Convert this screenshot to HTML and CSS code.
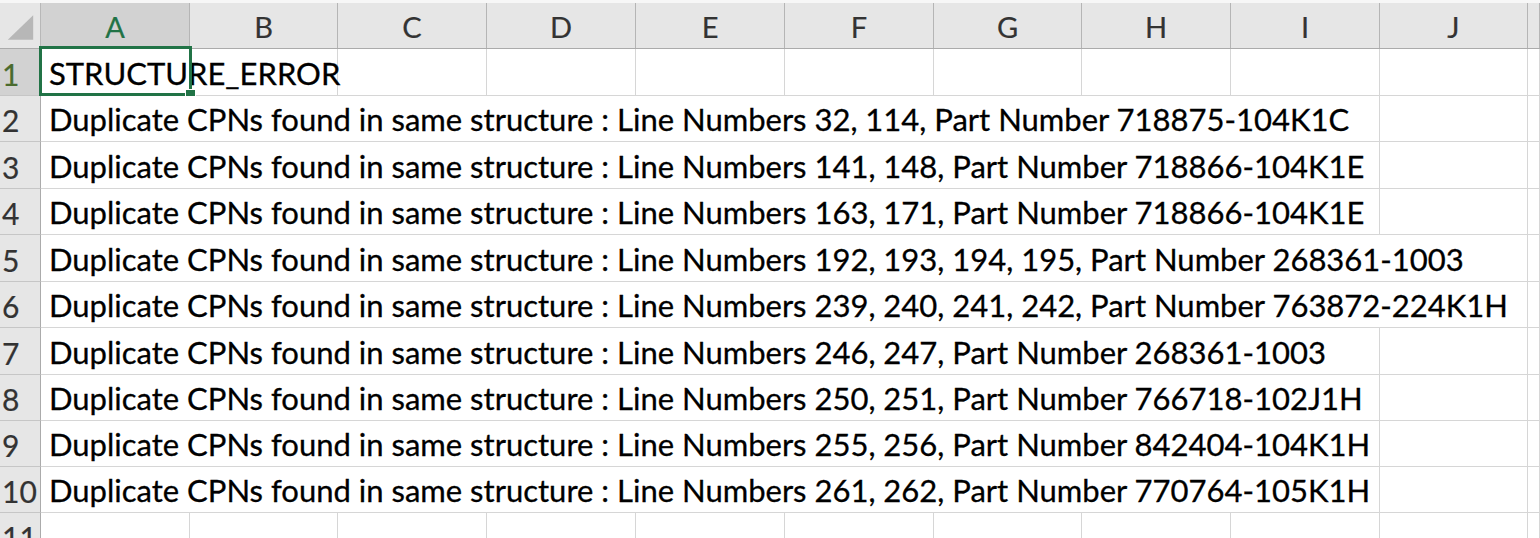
FILE: index.html
```html
<!DOCTYPE html>
<html>
<head>
<meta charset="utf-8">
<link rel="stylesheet" href="styles.css">
</head>
<body>
<div class="sheet">
  <div class="top-strip"></div>
  <div class="row head-row">
    <div class="corner"><svg width="41" height="44" viewBox="0 0 41 44"><polygon points="8,36 34,11 34,36" fill="#b7b7b7"/></svg></div>
    <div class="colh sel">A</div>
    <div class="colh">B</div>
    <div class="colh">C</div>
    <div class="colh">D</div>
    <div class="colh">E</div>
    <div class="colh">F</div>
    <div class="colh">G</div>
    <div class="colh">H</div>
    <div class="colh">I</div>
    <div class="colh">J</div>
    <div class="colh"></div>
  </div>

  <div class="row h47">
    <div class="rowh sel">1</div>
    <div class="cell text span2 active">STRUCTURE_ERROR<span class="selbox"><span class="handle"></span></span></div>
    <div class="cell"></div><div class="cell"></div><div class="cell"></div><div class="cell"></div><div class="cell"></div><div class="cell"></div><div class="cell"></div><div class="cell"></div><div class="cell"></div>
  </div>
  <div class="row h46">
    <div class="rowh">2</div>
    <div class="cell text span9">Duplicate CPNs found in same structure : Line Numbers 32, 114, Part Number 718875-104K1C</div>
    <div class="cell"></div><div class="cell"></div>
  </div>
  <div class="row h47">
    <div class="rowh">3</div>
    <div class="cell text span9">Duplicate CPNs found in same structure : Line Numbers 141, 148, Part Number 718866-104K1E</div>
    <div class="cell"></div><div class="cell"></div>
  </div>
  <div class="row h46">
    <div class="rowh">4</div>
    <div class="cell text span9">Duplicate CPNs found in same structure : Line Numbers 163, 171, Part Number 718866-104K1E</div>
    <div class="cell"></div><div class="cell"></div>
  </div>
  <div class="row h47">
    <div class="rowh">5</div>
    <div class="cell text span10">Duplicate CPNs found in same structure : Line Numbers 192, 193, 194, 195, Part Number 268361-1003</div>
    <div class="cell"></div>
  </div>
  <div class="row h46">
    <div class="rowh">6</div>
    <div class="cell text span10">Duplicate CPNs found in same structure : Line Numbers 239, 240, 241, 242, Part Number 763872-224K1H</div>
    <div class="cell"></div>
  </div>
  <div class="row h47">
    <div class="rowh">7</div>
    <div class="cell text span9">Duplicate CPNs found in same structure : Line Numbers 246, 247, Part Number 268361-1003</div>
    <div class="cell"></div><div class="cell"></div>
  </div>
  <div class="row h46">
    <div class="rowh">8</div>
    <div class="cell text span9">Duplicate CPNs found in same structure : Line Numbers 250, 251, Part Number 766718-102J1H</div>
    <div class="cell"></div><div class="cell"></div>
  </div>
  <div class="row h46">
    <div class="rowh">9</div>
    <div class="cell text span9">Duplicate CPNs found in same structure : Line Numbers 255, 256, Part Number 842404-104K1H</div>
    <div class="cell"></div><div class="cell"></div>
  </div>
  <div class="row h46">
    <div class="rowh">10</div>
    <div class="cell text span9">Duplicate CPNs found in same structure : Line Numbers 261, 262, Part Number 770764-105K1H</div>
    <div class="cell"></div><div class="cell"></div>
  </div>
  <div class="row h46">
    <div class="rowh">11</div>
    <div class="cell"></div><div class="cell"></div><div class="cell"></div><div class="cell"></div><div class="cell"></div><div class="cell"></div><div class="cell"></div><div class="cell"></div><div class="cell"></div><div class="cell"></div><div class="cell"></div>
  </div>
</div>
</body>
</html>
```

FILE: styles.css
```css
html, body {
  margin: 0;
  padding: 0;
  background: #ffffff;
  overflow: hidden;
}
.sheet {
  width: 1540px;
  height: 538px;
  overflow: hidden;
  font-family: Lato, "Open Sans", sans-serif;
  color: #111;
}
.top-strip {
  height: 3px;
  background: #f7f7f7;
}
.row {
  display: grid;
  grid-template-columns: 41px 149px 148px 149px 149px 149px 149px 148px 149px 149px 148px 1fr;
}
.head-row {
  height: 45px;
  background: #e6e6e6;
  border-bottom: 1px solid #ababab;
}
.h46 { height: 46px; }
.h47 { height: 47px; }
.corner {
  border-right: 1px solid #b8b8b8;
  box-sizing: border-box;
  display: flex;
  align-items: flex-end;
}
.corner svg { display: block; }
.colh {
  box-sizing: border-box;
  border-right: 1px solid #b5b5b5;
  display: flex;
  align-items: center;
  justify-content: center;
  font-size: 29px;
  color: #333;
  padding-top: 1px;
  -webkit-text-stroke: 0.2px #333;
}
.colh.sel {
  background: #d2d2d2;
  color: #217346;
  -webkit-text-stroke: 0.2px #217346;
}
.rowh {
  box-sizing: border-box;
  background: #e6e6e6;
  border-right: 1px solid #ababab;
  border-bottom: 1px solid #c6c6c6;
  font-size: 30px;
  color: #333;
  padding-left: 2px;
  display: flex;
  align-items: flex-end;
  padding-bottom: 6px;
  line-height: 1;
  overflow: visible;
  white-space: nowrap;
  -webkit-text-stroke: 0.2px #333;
}
.rowh.sel {
  background: #d2d2d2;
  color: #4a6b2e;
  -webkit-text-stroke: 0.2px #4a6b2e;
}
.cell {
  box-sizing: border-box;
  border-right: 1px solid #d6d6d6;
  border-bottom: 1px solid #d6d6d6;
  background: #fff;
}
.text {
  position: relative;
  white-space: nowrap;
  font-size: 31px;
  line-height: 1;
  padding-left: 8px;
  display: flex;
  align-items: flex-end;
  padding-bottom: 6px;
  color: #000;
  -webkit-text-stroke: 0.3px #000;
}
.span2 { grid-column: span 2; }
.span9 { grid-column: span 9; }
.span10 { grid-column: span 10; }
.selbox {
  position: absolute;
  left: -2px;
  top: -3px;
  width: 153px;
  height: 50px;
  box-sizing: border-box;
  border: 3px solid #217346;
}
.handle {
  position: absolute;
  right: -7px;
  bottom: -7px;
  width: 9px;
  height: 9px;
  background: #217346;
  border: 1px solid #fff;
}
```
